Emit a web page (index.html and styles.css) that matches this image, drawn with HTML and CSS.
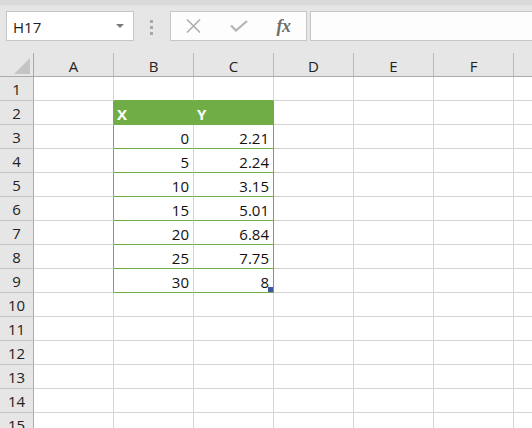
FILE: index.html
```html
<!DOCTYPE html>
<html>
<head>
<meta charset="utf-8">
<link rel="stylesheet" href="styles.css">
</head>
<body>
<div class="toolbar">
  <div class="namebox"><span class="nb-text">H17</span><span class="nb-arrow"></span></div>
  <div class="dots"><i></i><i></i><i></i></div>
  <div class="fbtns">
    <span class="fbtn"><svg width="15" height="14" viewBox="0 0 15 14"><path d="M1 0.5 L14 13.5 M14 0.5 L1 13.5" stroke="#acacac" stroke-width="1.5" fill="none"/></svg></span>
    <span class="fbtn"><svg width="18" height="12" viewBox="0 0 18 12"><path d="M1 5.5 L6 10.5 L17 1" stroke="#b4b4b4" stroke-width="2.2" fill="none"/></svg></span>
    <span class="fbtn fx">fx</span>
  </div>
  <div class="finput"></div>
</div>
<div class="sheet">
  <div class="hd corner"><svg width="17" height="17" viewBox="0 0 17 17"><polygon points="0,16 16,0 16,16" fill="#c4c4c4"/></svg></div>
  <div class="hd">A</div><div class="hd">B</div><div class="hd">C</div><div class="hd">D</div><div class="hd">E</div><div class="hd">F</div><div class="hd"></div>

  <div class="rh">1</div><div class="c"></div><div class="c gb"></div><div class="c gb"></div><div class="c"></div><div class="c"></div><div class="c"></div><div class="c"></div>

  <div class="rh">2</div><div class="c gr"></div><div class="c th">X</div><div class="c th">Y</div><div class="c"></div><div class="c"></div><div class="c"></div><div class="c"></div>

  <div class="rh">3</div><div class="c gr"></div><div class="c num gb">0</div><div class="c num gb gr">2.21</div><div class="c"></div><div class="c"></div><div class="c"></div><div class="c"></div>

  <div class="rh">4</div><div class="c gr"></div><div class="c num gb">5</div><div class="c num gb gr">2.24</div><div class="c"></div><div class="c"></div><div class="c"></div><div class="c"></div>

  <div class="rh">5</div><div class="c gr"></div><div class="c num gb">10</div><div class="c num gb gr">3.15</div><div class="c"></div><div class="c"></div><div class="c"></div><div class="c"></div>

  <div class="rh">6</div><div class="c gr"></div><div class="c num gb">15</div><div class="c num gb gr">5.01</div><div class="c"></div><div class="c"></div><div class="c"></div><div class="c"></div>

  <div class="rh">7</div><div class="c gr"></div><div class="c num gb">20</div><div class="c num gb gr">6.84</div><div class="c"></div><div class="c"></div><div class="c"></div><div class="c"></div>

  <div class="rh">8</div><div class="c gr"></div><div class="c num gb">25</div><div class="c num gb gr">7.75</div><div class="c"></div><div class="c"></div><div class="c"></div><div class="c"></div>

  <div class="rh">9</div><div class="c gr"></div><div class="c num gb">30</div><div class="c num gb gr last">8<span class="handle"></span></div><div class="c"></div><div class="c"></div><div class="c"></div><div class="c"></div>

  <div class="rh">10</div><div class="c"></div><div class="c"></div><div class="c"></div><div class="c"></div><div class="c"></div><div class="c"></div><div class="c"></div>

  <div class="rh">11</div><div class="c"></div><div class="c"></div><div class="c"></div><div class="c"></div><div class="c"></div><div class="c"></div><div class="c"></div>

  <div class="rh">12</div><div class="c"></div><div class="c"></div><div class="c"></div><div class="c"></div><div class="c"></div><div class="c"></div><div class="c"></div>

  <div class="rh">13</div><div class="c"></div><div class="c"></div><div class="c"></div><div class="c"></div><div class="c"></div><div class="c"></div><div class="c"></div>

  <div class="rh">14</div><div class="c"></div><div class="c"></div><div class="c"></div><div class="c"></div><div class="c"></div><div class="c"></div><div class="c"></div>

  <div class="rh">15</div><div class="c"></div><div class="c"></div><div class="c"></div><div class="c"></div><div class="c"></div><div class="c"></div><div class="c"></div>
</div>
</body>
</html>
```
FILE: styles.css
```css
* { box-sizing: border-box; }
html, body {
  margin: 0;
  padding: 0;
  width: 532px;
  height: 428px;
  overflow: hidden;
  background: #ffffff;
  font-family: "Open Sans", "Liberation Sans", sans-serif;
}

.toolbar {
  height: 53px;
  display: flex;
  align-items: flex-start;
  padding-top: 11px;
  background: linear-gradient(#dadada 0, #dadada 5px, #e6e6e6 6px, #e6e6e6 100%);
  width: 532px;
}

.namebox {
  margin-left: 6px;
  width: 128px;
  height: 30px;
  background: #ffffff;
  border: 1px solid #c6c6c6;
  display: flex;
  align-items: center;
  padding-left: 6px;
  position: relative;
}
.nb-text {
  font-size: 15px;
  color: #222;
  line-height: 20px;
  padding-top: 1px;
}
.nb-arrow {
  margin-left: auto;
  margin-right: 9px;
  width: 0;
  height: 0;
  border-left: 4px solid transparent;
  border-right: 4px solid transparent;
  border-top: 4px solid #7a7a7a;
}

.dots {
  margin-left: 16px;
  margin-top: 9px;
  width: 4px;
  display: flex;
  flex-direction: column;
  gap: 3px;
}
.dots i {
  display: block;
  width: 3px;
  height: 3px;
  background: #a8a8a8;
}

.fbtns {
  margin-left: 16px;
  width: 137px;
  height: 30px;
  background: #fdfdfd;
  border: 1px solid #c6c6c6;
  display: flex;
}
.fbtn {
  width: 45px;
  height: 28px;
  display: flex;
  align-items: center;
  justify-content: center;
}
.fx {
  font-family: "Liberation Serif", "DejaVu Serif", serif;
  font-style: italic;
  font-weight: bold;
  font-size: 18px;
  color: #6e6e6e;
  letter-spacing: -0.5px;
  padding-top: 1px;
}

.finput {
  margin-left: 3px;
  flex: 1;
  height: 30px;
  background: #fdfdfd;
  border: 1px solid #c6c6c6;
  border-right: none;
}

.sheet {
  display: grid;
  grid-template-columns: 34px repeat(7, 80px);
  grid-auto-rows: 24px;
  width: 594px;
}

.hd {
  background: #e6e6e6;
  border-right: 1px solid #b9b9b9;
  border-bottom: 1px solid #ababab;
  text-align: center;
  font-size: 15px;
  color: #222;
  line-height: 20px;
  padding-top: 3px;
}
.corner {
  border-right: 1px solid #ababab;
  padding: 5px 0 0 14px;
  line-height: 0;
  text-align: left;
}

.rh {
  background: #e6e6e6;
  border-right: 1px solid #ababab;
  border-bottom: 1px solid #c4c4c4;
  text-align: center;
  font-size: 15px;
  color: #222;
  line-height: 20px;
  padding-top: 2px;
}

.c {
  border-right: 1px solid #d4d4d4;
  border-bottom: 1px solid #d4d4d4;
  font-size: 15px;
  color: #111;
  line-height: 20px;
  padding: 3px 4px 0 4px;
  white-space: nowrap;
}
.num { text-align: right; }
.gb { border-bottom-color: #70ad47; }
.gr { border-right-color: #70ad47; }
.th {
  background: #70ad47;
  border-bottom-color: #70ad47;
  border-right-color: #70ad47;
  color: #ffffff;
  font-weight: bold;
  padding-left: 3px;
}
.last { position: relative; }
.handle {
  position: absolute;
  right: 0;
  bottom: 0;
  width: 5px;
  height: 5px;
  background: #3d55a3;
}
```
